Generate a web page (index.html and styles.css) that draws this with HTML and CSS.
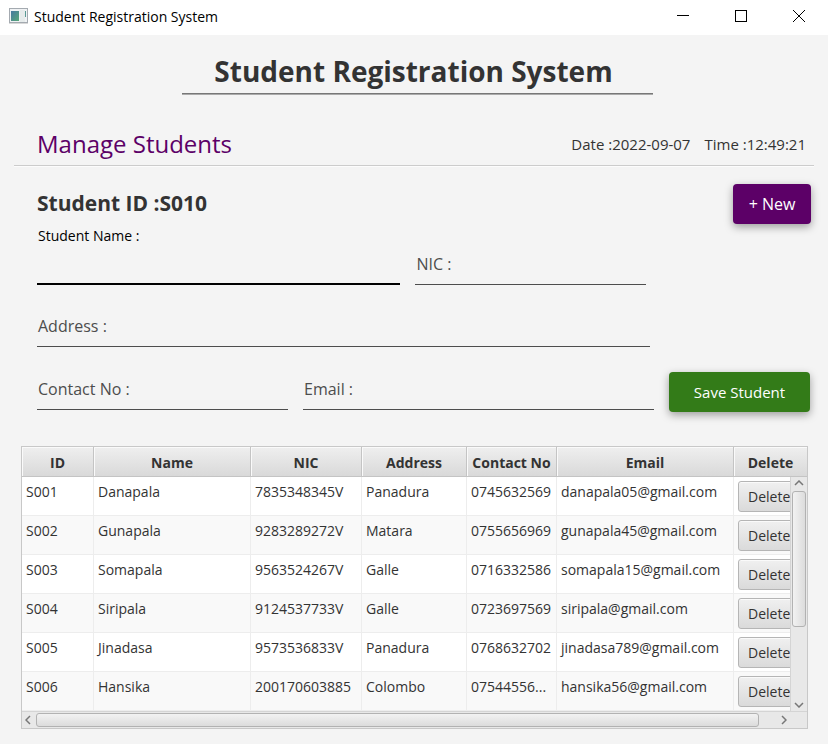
FILE: index.html
```html
<!DOCTYPE html>
<html lang="en">
<head>
<meta charset="utf-8">
<meta name="viewport" content="width=device-width, initial-scale=1">
<title>Student Registration System</title>
<link rel="stylesheet" href="styles.css">
</head>
<body>
<header class="titlebar">
  <svg class="app-icon" width="20" height="16" viewBox="0 0 20 16" aria-hidden="true">
    <defs><linearGradient id="pane" x1="0" y1="0" x2="1" y2="1"><stop offset="0" stop-color="#4878a0"/><stop offset="1" stop-color="#58a878"/></linearGradient></defs>
    <rect x="0.500" y="0.500" width="18" height="14" fill="#f0f2f4" stroke="#a4aab0"/>
    <rect x="0" y="15" width="19" height="1" fill="#d8d8d8"/>
    <rect x="2" y="3" width="8" height="10" fill="url(#pane)"/>
    <rect x="11" y="2" width="5" height="12" fill="#e6ebeb"/>
    <rect x="16" y="3" width="1" height="6" fill="#5a9a94"/>
  </svg>
  <span class="titlebar-text">Student Registration System</span>
  <div class="window-buttons">
    <button type="button" aria-label="Minimize"><svg width="12" height="12" shape-rendering="crispEdges"><path d="M0 5.500H12" stroke="#000"/></svg></button>
    <button type="button" aria-label="Maximize"><svg width="12" height="12"><rect x="0.500" y="0.500" width="11" height="11" fill="none" stroke="#000"/></svg></button>
    <button type="button" aria-label="Close"><svg width="12" height="12"><path d="M0 0L12 12M12 0L0 12" stroke="#000"/></svg></button>
  </div>
</header>

<main>
  <h1>Student Registration System</h1>

  <div class="section-head">
    <h2>Manage Students</h2>
    <p class="clock"><span>Date :2022-09-07</span><span>Time :12:49:21</span></p>
  </div>

  <form class="form">
    <div class="id-row">
      <h3>Student ID :S010</h3>
      <button type="button" class="action new">+ New</button>
    </div>
    <div class="row row-name">
      <div class="field floating name"><label for="name">Student Name :</label><input id="name" type="text"></div>
      <div class="field nic"><label for="nic">NIC :</label><input id="nic" type="text"></div>
    </div>
    <div class="row row-address">
      <div class="field address"><label for="address">Address :</label><input id="address" type="text"></div>
    </div>
    <div class="row row-contact">
      <div class="field contact"><label for="contact">Contact No :</label><input id="contact" type="tel"></div>
      <div class="field email"><label for="email">Email :</label><input id="email" type="email"></div>
      <button type="button" class="action save">Save Student</button>
    </div>
  </form>

  <section class="table-view" aria-label="Students">
    <table>
      <colgroup><col class="c-id"><col class="c-name"><col class="c-nic"><col class="c-address"><col class="c-contact"><col class="c-email"><col class="c-delete"></colgroup>
      <thead>
        <tr><th>ID</th><th>Name</th><th>NIC</th><th>Address</th><th>Contact No</th><th>Email</th><th>Delete</th></tr>
      </thead>
      <tbody>
        <tr><td>S001</td><td>Danapala</td><td>7835348345V</td><td>Panadura</td><td>0745632569</td><td>danapala05@gmail.com</td><td><button type="button" class="delete">Delete</button></td></tr>
        <tr><td>S002</td><td>Gunapala</td><td>9283289272V</td><td>Matara</td><td>0755656969</td><td>gunapala45@gmail.com</td><td><button type="button" class="delete">Delete</button></td></tr>
        <tr><td>S003</td><td>Somapala</td><td>9563524267V</td><td>Galle</td><td>0716332586</td><td>somapala15@gmail.com</td><td><button type="button" class="delete">Delete</button></td></tr>
        <tr><td>S004</td><td>Siripala</td><td>9124537733V</td><td>Galle</td><td>0723697569</td><td>siripala@gmail.com</td><td><button type="button" class="delete">Delete</button></td></tr>
        <tr><td>S005</td><td>Jinadasa</td><td>9573536833V</td><td>Panadura</td><td>0768632702</td><td>jinadasa789@gmail.com</td><td><button type="button" class="delete">Delete</button></td></tr>
        <tr><td>S006</td><td>Hansika</td><td>200170603885</td><td>Colombo</td><td>07544556...</td><td>hansika56@gmail.com</td><td><button type="button" class="delete">Delete</button></td></tr>
      </tbody>
    </table>
    <div class="vbar">
      <svg width="10" height="6"><path d="M1 5L5 1L9 5" /></svg>
      <div class="vtrack"><div class="vthumb"></div></div>
      <svg width="10" height="6"><path d="M1 1L5 5L9 1" /></svg>
    </div>
    <div class="hbar">
      <svg width="6" height="10"><path d="M5 1L1 5L5 9" /></svg>
      <div class="hthumb"></div>
      <svg width="6" height="10"><path d="M1 1L5 5L1 9" /></svg>
    </div>
  </section>
</main>
</body>
</html>
```
FILE: styles.css
```css
* {
  box-sizing: border-box;
}

body {
  margin: 0;
  background: #f4f4f4;
  color: #333;
  font: 14px/20px "Open Sans", "Noto Sans", sans-serif;
}

h1, h2, h3, p {
  margin: 0;
}

button, input {
  font: inherit;
}

/* Window title bar */
.titlebar {
  display: flex;
  align-items: center;
  height: 35px;
  padding-left: 9px;
  background: #fff;
  color: #000;
}

.titlebar-text {
  margin-left: 5px;
  padding-bottom: 2px;
}

.app-icon {
  margin-bottom: 3px;
}

.window-buttons {
  display: flex;
  align-self: stretch;
  margin-left: auto;
}

.window-buttons button {
  display: grid;
  place-items: center;
  width: 58px;
  padding: 0 0 4px;
  border: 0;
  background: none;
}

/* Headings */
main {
  padding: 16px 14px 15px;
}

h1 {
  margin: 0 161px 0 168px;
  padding: 0 8px 2px 0;
  border-bottom: 1px solid #777;
  box-shadow: 0 1px #aaa;
  font-size: 28px;
  line-height: 40px;
  text-align: center;
  white-space: nowrap;
}

.section-head {
  display: flex;
  align-items: center;
  justify-content: space-between;
  margin-top: 30px;
  padding: 0 8px 2px 23px;
  height: 42px;
  border-bottom: 1px solid #ccc;
  box-shadow: 0 1px #fcfcfc;
}

h2 {
  color: #5c0067;
  font-size: 24px;
  font-weight: 400;
}

.clock {
  display: flex;
  gap: 14px;
  font-size: 15px;
}

/* Form */
.form {
  padding: 18px 3px 0 23px;
}

.id-row {
  display: flex;
  align-items: center;
  justify-content: space-between;
}

h3 {
  padding-bottom: 2px;
  font-size: 21px;
}

.action {
  flex: none;
  height: 40px;
  padding: 0;
  border: 0;
  border-radius: 4px;
  box-shadow: 0 3px 8px rgba(0, 0, 0, 0.36);
  color: #fff;
}

.new {
  width: 78px;
  background: #5c0067;
  font-size: 16px;
}

.save {
  width: 141px;
  background: #337b18;
  font-size: 15px;
}

.row {
  display: flex;
  align-items: flex-end;
  gap: 15px;
}

.row-name {
  margin-top: 2px;
  padding-right: 165px;
}

.row-address {
  margin-top: 22px;
  padding-right: 161px;
}

.row-contact {
  align-items: flex-start;
  margin-top: 23px;
  padding-right: 1px;
}

.row-contact .save {
  margin-top: 2px;
}

.field {
  display: grid;
  flex-basis: 0;
  min-width: 0;
}

.name { flex-grow: 364; }
.nic { flex-grow: 231; }
.address { flex-grow: 1; }
.contact { flex-grow: 251; }
.email { flex-grow: 351; }

.field label,
.field input {
  grid-area: 1 / 1;
}

.field label {
  padding-left: 1px;
  color: #4d4d4d;
  font-size: 16px;
  line-height: 38px;
}

.field input {
  width: 100%;
  height: 40px;
  padding: 0 1px;
  border: 0;
  border-bottom: 1px solid #4d4d4d;
  outline: 0;
  background: none;
}

.floating label {
  color: #000;
  font-size: 14px;
  line-height: 20px;
}

.floating input {
  grid-area: 2 / 1;
  height: 39px;
  border-bottom: 2px solid #000;
}

/* Table */
.table-view {
  position: relative;
  margin: 34px 6px 0 7px;
  border: 1px solid #c8c8c8;
  background: #fff;
}

table {
  width: 100%;
  border-collapse: separate;
  border-spacing: 0;
  table-layout: fixed;
}

.c-id { width: 72px; }
.c-nic { width: 111px; }
.c-address { width: 105px; }
.c-contact { width: 90px; }
.c-email { width: 177px; }
.c-delete { width: 73px; }

th, td {
  overflow: hidden;
  white-space: nowrap;
}

th {
  height: 30px;
  padding: 2px 0 0;
  border-right: 1px solid #c4c4c4;
  border-bottom: 1px solid #c4c4c4;
  background: linear-gradient(#efefef, #d9d9d9);
  box-shadow: inset 1px 1px #fafafa;
}

th:last-child,
td:last-child {
  border-right: 0;
}

td {
  height: 39px;
  padding: 5px 4px 0;
  border-right: 1px solid #ededed;
  border-bottom: 1px solid #ededed;
  vertical-align: top;
}

td:last-child {
  padding-top: 4px;
}

tbody tr:nth-child(even) {
  background: #f9f9f9;
}

.delete {
  display: block;
  width: 66px;
  height: 31px;
  padding: 0 9px;
  border: 1px solid #b5b5b5;
  border-radius: 3px;
  background: linear-gradient(#f0f0f0, #dadada);
  box-shadow: inset 0 1px #fafafa;
  color: #333;
  text-align: left;
}

/* Scroll bars */
.vbar {
  position: absolute;
  top: 30px;
  right: 0;
  bottom: 17px;
  display: flex;
  flex-direction: column;
  align-items: center;
  width: 17px;
  padding: 3px 0;
  border-left: 1px solid #d4d4d4;
  background: #e8e8e8;
}

.vtrack {
  flex: 1;
  align-self: stretch;
  padding: 5px 1px;
}

.vthumb {
  height: 66%;
  border: 1px solid #b2b2b2;
  border-radius: 3px;
  background: linear-gradient(90deg, #f2f2f2, #dcdcdc);
}

.hbar {
  display: flex;
  align-items: center;
  height: 17px;
  padding: 0 20px 0 3px;
  border-top: 1px solid #d4d4d4;
  background: #e8e8e8;
}

.hthumb {
  flex: 1;
  height: 14px;
  margin: 0 22px 0 5px;
  border: 1px solid #b2b2b2;
  border-radius: 3px;
  background: linear-gradient(#f2f2f2, #dcdcdc);
}

.vbar path,
.hbar path {
  fill: none;
  stroke: #777;
  stroke-width: 1.5;
}
```
